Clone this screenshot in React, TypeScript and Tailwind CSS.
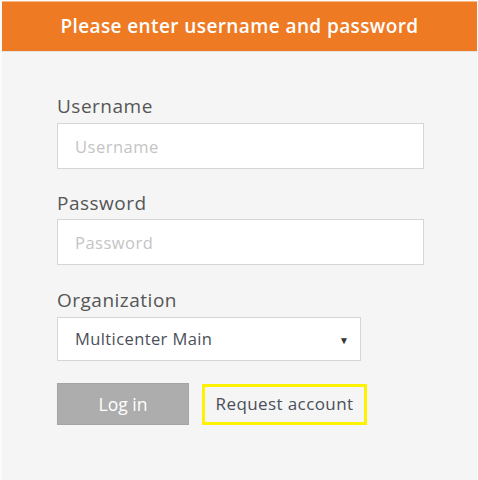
import { useState } from 'react';

const font = { fontFamily: '"Open Sans", Lato, sans-serif' };

export default function App() {
  const [org, setOrg] = useState('Multicenter Main');

  return (
    <div className="w-[478px] h-[480px] bg-[#fbfbfb] pt-[1px] pl-[2px] pr-[1px]" style={font}>
      <div className="h-full flex flex-col bg-[#f5f5f5]">
        <div className="h-[50px] bg-[#ee7a24] border-t border-[#f7b888] flex items-center justify-center">
          <h1 className="text-white text-[19px] font-semibold tracking-[0.4px]">
            Please enter username and password
          </h1>
        </div>
        <div className="border-t border-[#e4e4e4] pl-[55px] pt-[43px]">
          <label className="block text-[19px] leading-[22px] tracking-[0.5px] text-[#555] mb-[6px]">Username</label>
          <input
            placeholder="Username"
            className="w-[367px] h-[46px] bg-white border border-[#d6d6d6] px-[17px] text-[16.5px] tracking-[0.5px] text-[#555] placeholder:text-[#c4c4c4] outline-none"
          />

          <label className="block text-[19px] leading-[22px] tracking-[0.5px] text-[#555] mt-[23px] mb-[5px]">Password</label>
          <input
            type="password"
            placeholder="Password"
            className="w-[367px] h-[46px] bg-white border border-[#d6d6d6] px-[17px] text-[16.5px] tracking-[0.5px] text-[#555] placeholder:text-[#c4c4c4] outline-none"
          />

          <label className="block text-[19px] leading-[22px] tracking-[0.5px] text-[#555] mt-[24px] mb-[6px]">Organization</label>
          <div className="relative w-[304px] h-[44px] bg-white border border-[#d6d6d6]">
            <select
              value={org}
              onChange={(e) => setOrg(e.target.value)}
              className="appearance-none w-full h-full bg-transparent pl-[17px] pr-8 text-[16.5px] tracking-[0.4px] text-[#4a4f5a] outline-none"
            >
              <option>Multicenter Main</option>
            </select>
            <span className="pointer-events-none absolute right-[11px] top-[15px] text-[10px] text-[#333]">▼</span>
          </div>

          <div className="flex items-center gap-[13px] mt-[22px]">
            <button className="w-[132px] h-[42px] bg-[#adadad] border border-[#a4a4a4] text-white text-[17.5px]">
              Log in
            </button>
            <button className="w-[165px] h-[41px] border-[3px] border-[#fff200] text-[#4a4f5a] text-[17px] tracking-[0.4px]">
              Request account
            </button>
          </div>
        </div>
      </div>
    </div>
  );
}
